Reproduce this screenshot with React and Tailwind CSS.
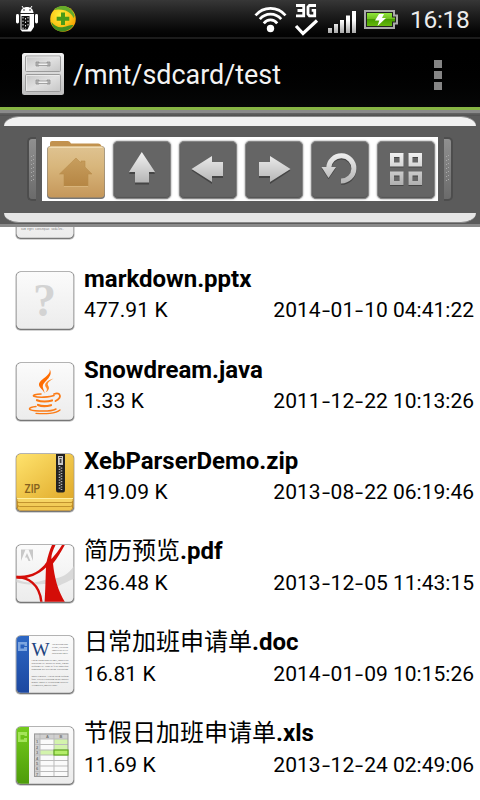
import React from "react";

function StatusBar() {
  return (
    <div className="flex h-[37px] w-full items-start bg-gradient-to-b from-[#373737] to-[#020202]">
      <svg width="80" height="37" viewBox="0 0 80 37">
        <defs>
          <radialGradient id="ball" cx="40%" cy="35%" r="70%">
            <stop offset="0" stopColor="#fff13a" />
            <stop offset=".6" stopColor="#fbc516" />
            <stop offset="1" stopColor="#f39a00" />
          </radialGradient>
        </defs>
        <path d="M22 6l1.600 2.400M32 6l-1.600 2.400" stroke="#fff" strokeWidth="1" />
        <path d="M20.500 13c.3-4 3-6 6.500-6s6.200 2 6.500 6z" fill="#fff" />
        <circle cx="24" cy="10" r=".8" fill="#222" />
        <circle cx="30" cy="10" r=".8" fill="#222" />
        <rect x="16" y="14" width="3" height="9.500" rx="1.400" fill="#fff" />
        <rect x="35" y="14" width="3" height="9.500" rx="1.400" fill="#fff" />
        <path d="M20.500 14H34V27l-3 4.500H22l-1.500-2z" fill="#fff" />
        <path d="M21.500 16h8v9l-2 4.500h-6z" fill="#111" />
        <path d="M23 17v12M25.500 18v11M28 17v9" stroke="#ddd" strokeWidth="1" strokeDasharray="1.500 2" />
        <circle cx="63" cy="19" r="12.800" fill="url(#ball)" />
        <path d="M54 10C58 5 68 4 73 12c2 3 2 4 .5 6-1-3-4-6-8-7.500-4-1-8-1.500-11.500-.5z" fill="#65ab2a" />
        <path d="M73.500 25c-4 7-14 9-19.500 3-1.500-2-2.500-4-2.500-6 3 4 7 6 12 5 4-1 7-2.500 10-2z" fill="#438f20" />
        <path d="M61 12.500h4v4.300h4.300v4h-4.300v4.300h-4v-4.300h-4.300v-4H61z" fill="#4a9a18" />
      </svg>
      <svg className="ml-[170px]" width="150" height="37" viewBox="250 0 150 37">
        <defs>
          <linearGradient id="sig" x1="0" y1="10" x2="0" y2="33" gradientUnits="userSpaceOnUse">
            <stop offset=".45" stopColor="#fff" />
            <stop offset="1" stopColor="#aaa" />
          </linearGradient>
          <linearGradient id="bat" x1="0" y1="0" x2="0" y2="1">
            <stop offset="0" stopColor="#8fe63b" />
            <stop offset=".48" stopColor="#6fbd1d" />
            <stop offset=".5" stopColor="#479e00" />
            <stop offset="1" stopColor="#66b80d" />
          </linearGradient>
        </defs>
        <g fill="none" stroke="#fff">
          <path d="M255.500 15.300C263.500 6 277.500 6 285.500 15.300" strokeWidth="2.600" />
          <path d="M259.800 19.200C265.500 12.500 275.500 12.500 281.200 19.200" strokeWidth="2.700" />
          <path d="M263.800 23.300C267.300 18.800 273.700 18.800 277.200 23.300" strokeWidth="2.700" />
        </g>
        <circle cx="270.500" cy="28.500" r="3.700" fill="#fff" />
        <path d="M296 5.500h7.700v10.300H296M297.500 10.500h6" fill="none" stroke="#fff" strokeWidth="2.800" />
        <path d="M316 5.500h-6.600l-1.400 1.500v7l1.400 1.800h5.300v-5.500h-3" fill="none" stroke="#fff" strokeWidth="2.800" />
        <path d="M296 26l7 7.500 14-13" fill="none" stroke="#fff" strokeWidth="3.200" />
        <path d="M328 28h4v5h-4zM334 24h4v9h-4zM340 20h4v13h-4zM346 15.500h4V33h-4zM352 11h4v22h-4z" fill="url(#sig)" />
        <path d="M364 10h31v4.500h3v10h-3V29h-31z" fill="#aaa" />
        <path d="M366 12h27v4.500h3v6h-3V27h-27z" fill="#222" />
        <path d="M367 13h25v4.500h3v4h-3V26h-25z" fill="url(#bat)" />
        <path d="M379 14h5l-2 4h4l-8.500 8 1.800-5.500H375z" fill="#fff" />
      </svg>
      <div className="ml-[10px] mt-[5px] whitespace-nowrap font-[Roboto,sans-serif] text-[24.500px] leading-[29px] tracking-[-0.3px] text-[#ececec]">
        16:18
      </div>
    </div>
  );
}

function ActionBar() {
  return (
    <div className="flex h-[73px] items-center border-b-[3px] border-t-2 border-b-[#87b544] border-t-[#1c1c1c] bg-gradient-to-b from-black to-[#060707] pl-[21px] pr-[38px]">
      <svg width="44" height="44" viewBox="0 0 44 44" className="mt-px">
        <defs>
          <linearGradient id="cab" x1="0" y1="0" x2="0" y2="1">
            <stop offset="0" stopColor="#f2f2f2" />
            <stop offset="1" stopColor="#bdbdbd" />
          </linearGradient>
          <linearGradient id="drawer" x1="0" y1="0" x2="1" y2="1">
            <stop offset="0" stopColor="#c4c4c4" />
            <stop offset=".5" stopColor="#e0e0e0" />
            <stop offset="1" stopColor="#c6c6c6" />
          </linearGradient>
        </defs>
        <rect x="1" y="1" width="42" height="42" rx="2.500" fill="url(#cab)" />
        <rect x="4.500" y="4" width="35" height="15.500" rx="1" fill="url(#drawer)" stroke="#9b9b9b" />
        <rect x="4.500" y="22.500" width="35" height="17" rx="1" fill="url(#drawer)" stroke="#9b9b9b" />
        <path d="M5.500 18.500V5H38M5.500 38.500V23.500H38" fill="none" stroke="#efefef" strokeWidth=".8" />
        {[10, 28].map((y) => (
          <g key={y}>
            <path d={`M15 ${y}h3v4h-3zM26 ${y}h3v4h-3z`} fill="#bbb" stroke="#888" strokeWidth=".7" />
            <rect x="17" y={y + 1} width="10" height="2.500" fill="#f1f1f1" stroke="#929292" strokeWidth=".8" />
          </g>
        ))}
      </svg>
      <div className="ml-[8px] mt-[3px] flex-1 whitespace-nowrap font-[Roboto,sans-serif] text-[26.900px] leading-8 text-[#f3f3f3]">
        /mnt/sdcard/test
      </div>
      <div className="mt-[3px] flex flex-col gap-[3px]">
        <i className="block size-2 bg-[#858585]" />
        <i className="block size-2 bg-[#858585]" />
        <i className="block size-2 bg-[#858585]" />
      </div>
    </div>
  );
}

function ToolButton({ children }) {
  return (
    <div className="size-[58px] rounded-[5px] border border-[#858585] bg-[#656565] shadow-[0_0_2px_#777,inset_0_-1px_1px_#555]">
      <svg width="56" height="56" viewBox="1 1 56 56">{children}</svg>
    </div>
  );
}

function HomeButton() {
  return (
    <svg width="58" height="60" viewBox="0 0 58 60" className="overflow-visible">
      <defs>
        <linearGradient id="fold" x1="0" y1="0" x2="0" y2="1">
          <stop offset="0" stopColor="#dfc391" />
          <stop offset=".4" stopColor="#d8b67c" />
          <stop offset="1" stopColor="#c5975a" />
        </linearGradient>
        <linearGradient id="house" x1="0" y1="0" x2="0" y2="1">
          <stop offset="0" stopColor="#c79e5e" />
          <stop offset="1" stopColor="#b68644" />
        </linearGradient>
      </defs>
      <rect x="0" y="5" width="58" height="53" rx="4" fill="#777" />
      <path d="M3 7V2q0-2 2-2h16q2 0 3 2.500h27q3 0 4 4z" fill="#c2924e" />
      <rect x=".5" y="5" width="57" height="51.500" rx="4" fill="url(#fold)" />
      <path d="M2.500 6.500h53" stroke="#f1dcb3" />
      <path d="M12.500 33 29 17l5 5v-2h4v6l7 7h-4v12H17V33z" fill="url(#house)" stroke="#b98d4c" strokeWidth=".6" />
      <path d="M17 45.500h24" stroke="#e1bf88" strokeWidth=".7" />
    </svg>
  );
}

function Handle({ right }) {
  return (
    <div
      className={
        right
          ? "flex h-[64px] w-[9px] items-center justify-center rounded-r-[5px] border-y-2 border-r-2 border-[#4d4d4d] bg-gradient-to-b from-[#909090] to-[#6b6b6b]"
          : "flex h-[64px] w-[9px] items-center justify-center rounded-l-[5px] border-y-2 border-l-2 border-[#4d4d4d] bg-gradient-to-b from-[#909090] to-[#6b6b6b]"
      }
    >
      <svg width="5" height="29" viewBox="0 0 5 29">
        <path d="M1.500 1v28M3.500 0v28" stroke="#a9a9a9" strokeWidth="1" strokeDasharray="1 3" />
      </svg>
    </div>
  );
}

function Toolbar() {
  return (
    <div className="h-[117px] border-y-[3px] border-[#8a8a8a] bg-[#5b5b5b]">
      <div className="h-[3px] bg-gradient-to-b from-[#666] to-[#505050]" />
      <div className="mx-[4px] h-[10px] rounded-t-[15px_10px] border-t border-[#888] bg-[#f1f1f1]" />
      <div className="flex h-[87px] items-start pt-[11px]">
        <div className="ml-[27px]"><Handle /></div>
        <div className="ml-[6px] flex h-16 w-[396px] items-start gap-2 bg-white pl-[5px] pt-[4px]">
          <HomeButton />
          <ToolButton>
            <path d="M28.800 13 16 33h6v10.500h14V33h6z" fill="#454545" />
            <path d="M28.800 11 16 31h6v10.500h14V31h6z" fill="url(#arrow)" />
          </ToolButton>
          <ToolButton>
            <path d="M12.500 29.500 33 17v6h11v14H33v6z" fill="#454545" />
            <path d="M12.500 28 33 15v6h11v14H33v6z" fill="url(#arrow)" />
          </ToolButton>
          <ToolButton>
            <path d="M45.500 29.500 25 17v6H14v14h11v6z" fill="#454545" />
            <path d="M45.500 28 25 15v6H14v14h11v6z" fill="url(#arrow)" />
          </ToolButton>
          <ToolButton>
            <g transform="translate(0 1.300)" stroke="#454545" fill="none">
              <path d="M17.700 27A12.600 12.600 0 1 1 30 40" strokeWidth="5" />
              <path d="M10.500 26h14.500l-7.500 11z" fill="#454545" stroke="none" />
            </g>
            <path d="M17.700 27A12.600 12.600 0 1 1 30 40" fill="none" stroke="url(#arrow)" strokeWidth="5" />
            <path d="M10.500 26h14.500l-7.500 11z" fill="url(#arrow)" />
          </ToolButton>
          <ToolButton>
            {[[13, 12], [31.5, 12], [13, 30.5], [31.5, 30.5]].map(([x, y]) => (
              <g key={x + "-" + y} fill="none" strokeWidth="4">
                <rect x={x + 2} y={y + 3} width="9.500" height="9.500" stroke="#454545" />
                <rect x={x + 2} y={y + 2} width="9.500" height="9.500" stroke="url(#arrow)" />
              </g>
            ))}
          </ToolButton>
        </div>
        <div className="ml-[6px]"><Handle right /></div>
      </div>
      <div className="mx-[4px] h-[10px] rounded-b-[15px_10px] border-b border-[#888] bg-[#e6e6e6]" />
    </div>
  );
}

function Tile({ children, print }) {
  return (
    <svg width="62" height="62" viewBox="-2 -2 62 62" className="shrink-0">
      <rect x="-.7" y="-.2" width="59.400" height="59" rx="5" fill="#c4c4c4" />
      <rect x="0" y="-.4" width="58" height="58.300" rx="4.500" fill="#777" />
      <rect x=".5" y="0" width="57" height="56.700" rx="4.500" fill="url(#paper)" />
      <g clipPath="url(#tileclip)">{children}</g>
      {print}
    </svg>
  );
}

function UnknownIcon() {
  return (
    <Tile
      print={
        <text x="28.500" y="43.500" textAnchor="middle" className="font-['Liberation_Serif',serif] text-[46px] font-bold" fill="#d3d3d3">?</text>
      }
    />
  );
}

function TextIcon() {
  return (
    <Tile
      print={
        <text x="5" y="49" textLength="43" lengthAdjust="spacingAndGlyphs" className="font-['Liberation_Mono',monospace] text-[3.400px]" fill="#777">sum eget consequat sodales.</text>
      }
    />
  );
}

function JavaIcon() {
  return (
    <Tile>
      <g fill="none" stroke="#fb7b16" strokeLinecap="round">
        <path d="M25 31c-5 .2-9 1.300-7 2.300 4 1.500 16 1 20-.7" strokeWidth="1.600" />
        <path d="M38 31c6-2 9 3 1.500 7" strokeWidth="1.800" />
        <path d="M21 37.200c4 1.800 11 1.500 15 .3M22 42c4 1.600 9 1.200 13 .2" strokeWidth="2.200" />
        <path d="M20 43.500c-8 1-9 3.500-1 4.200 9 .8 17 .3 21-1.700" strokeWidth="1.500" />
        <path d="M20 50.300c9 1 20 .2 24-3.300" strokeWidth="1.300" />
      </g>
      <path d="M33.500 6c2.500 7-11 10-10.500 16 .3 3 4.500 5 5.500 8.500 0-3.500-2.500-5.500-1.500-8.500C28.500 18 38 13 33.500 6z" fill="#ff6c00" />
      <path d="M37.500 15.500c-8 2.500-10 6-7 9.500 1 1.500 0 3.500-1 4.500 5-3 3.500-5.500 2.300-7.500-.5-2.500 2.500-4.500 5.700-6.500z" fill="#ff8a26" />
    </Tile>
  );
}

function ZipIcon() {
  return (
    <Tile
      print={
        <text x="8.500" y="38.500" textLength="15.500" lengthAdjust="spacingAndGlyphs" className="font-[Roboto,sans-serif] text-[13px] font-medium" fill="#84601d">ZIP</text>
      }
    >
      <defs>
        <linearGradient id="zip" x1="0" y1="0" x2="1" y2="1">
          <stop offset="0" stopColor="#ffe36d" />
          <stop offset="1" stopColor="#e0aa2a" />
        </linearGradient>
      </defs>
      <rect width="58" height="58" fill="#c08a20" />
      <rect x="2" y="51" width="54" height="5" rx="2" fill="#f0c650" />
      <rect x="1.500" y="47.500" width="55" height="5" rx="2" fill="#f2cb58" stroke="#b58423" strokeWidth=".8" />
      <rect x="1" y="43.500" width="56" height="5" rx="2" fill="#f6d464" stroke="#b58423" strokeWidth=".8" />
      <rect width="58" height="44.500" rx="3" fill="url(#zip)" />
      <path d="M1 44.500h56" stroke="#fff0a0" />
      <path d="M40 0h9v36q0 2.500-2 2.500h-5q-2 0-2-2.500z" fill="#222" />
      <path d="M43.500 12v24M45.500 13.500V36" stroke="#b6b6b6" strokeWidth="1.600" strokeDasharray="1.200 1.500" />
      <path d="M42 2h5v9h-5z" fill="#c9c9c9" />
      <path d="M43.700 5h1.700v4h-1.700zM43 3h3v1h-3z" fill="#444" />
    </Tile>
  );
}

function PdfIcon() {
  return (
    <Tile>
      <path d="M58 21C52 30 46 32 37 34L32 34C22 37 12 40 0 34v3c12 4 21 2 32 2l6 3c9-2 13-6 20-8z" fill="#d9d9d9" />
      <path d="M5 4.500h12v11.500H5z" fill="#c8c8c8" />
      <path d="M5 16 9.500 4.500h3L17 16h-2.500l-3.500-8-2 4.500h2l1.500 3.500z" fill="#f8f8f8" />
      <path d="M36 0 39.500 0C36.500 6 35 11 35.500 14 39 10 43 5 46 0h2.800C45 7 41.500 13 37 18.500 38.500 33 42 46 49.500 58H28.500C29.500 45 29.500 32 30 22.500 21 31 10 34.500 0 33.500V30.500C13 32 24 27 30.500 17 32 11 33.500 5 36 0z" fill="#d40d08" />
      <path d="M0 32.300c11-.5 24 6 25.500 26" fill="none" stroke="#d40d08" strokeWidth="2.400" />
    </Tile>
  );
}

const docHead = ["Lorem ipsum dolor", "sit amet, vestibulum", "consectetur ut elit", "adipiscing ligula."];
const docBody = [
  [25, "Lorem ipsum dolor sit amet, consectetur"],
  [28, "adipiscing elit. Mauris ac tortor, tempor"],
  [31, "aliquam elit. Nunc ut felis consequat"],
  [34, "dignissim nec sed lorem vestibulum."],
  [41, "Morbi a mauris. Aenean lorem aliquam"],
  [44, "fusce viverra vestibulum integer sodales"],
  [47, "ornare ligula et vestibulum ultrices."],
  [50, "Vivamus sed, molestie nunc."],
];

function DocIcon() {
  return (
    <Tile
      print={
        <>
          <text x="15.500" y="19.500" textLength="18" lengthAdjust="spacingAndGlyphs" className="font-['Liberation_Serif',serif] text-[19px]" fill="#1d4480">W</text>
          <g className="font-['Liberation_Serif',serif] text-[2.700px]" fill="#555">
            {docHead.map((t, i) => (
              <text key={t} x="36" y={9 + i * 3} textLength="16" lengthAdjust="spacingAndGlyphs">{t}</text>
            ))}
            {docBody.map(([y, t]) => (
              <text key={y} x="15.500" y={y} textLength={y === 50 ? "26" : "37"} lengthAdjust="spacingAndGlyphs">{t}</text>
            ))}
          </g>
        </>
      }
    >
      <rect width="13" height="58" fill="url(#blue)" />
      <path d="M2 6h9v4h-2.500V8.500h-4v4H8V11h3v4H2z" fill="#7da5df" />
    </Tile>
  );
}

function XlsIcon() {
  return (
    <Tile
      print={
        <g className="font-['Liberation_Sans',sans-serif] text-[4px] font-bold" fill="#777">
          <text x="30" y="11">A</text>
          <text x="43.500" y="11">B</text>
          {[1, 2, 3, 4, 5, 6, 7].map((n) => (
            <text key={n} x="20" y={11 + n * 5.4}>{n}</text>
          ))}
        </g>
      }
    >
      <rect width="13" height="58" fill="url(#green)" />
      <path d="M2 5h9v4h-2.500V8h-4v4.500H8V11h3v4H2z" fill="#a4e45a" />
      <rect x="18" y="6.500" width="34" height="43" fill="#fafafa" />
      <path d="M18 6.500h34V12H18zM18 6.500h6v43h-6z" fill="#d0d0d0" />
      <path d="M38 12h14v11H38zM24 23h14v5H24z" fill="#d3f3ac" />
      <path d="M18 12h34M18 17.500h34M18 23h34M18 28h34M18 33.500h34M18 39h34M18 44.500h34M24 6.500v43M38 6.500v43" stroke="#bbb" strokeWidth="1" />
      <rect x="18.500" y="7" width="33.500" height="42.500" fill="none" stroke="#999" />
      <rect x="38" y="23" width="14" height="5" fill="#b4ed69" stroke="#61ab1f" strokeWidth="1.200" />
    </Tile>
  );
}

const files = [
  { Icon: TextIcon, name: "", ext: "", size: "", date: "" },
  { Icon: UnknownIcon, name: "", ext: "markdown.pptx", size: "477.91 K", date: "2014-01-10 04:41:22" },
  { Icon: JavaIcon, name: "", ext: "Snowdream.java", size: "1.33 K", date: "2011-12-22 10:13:26" },
  { Icon: ZipIcon, name: "", ext: "XebParserDemo.zip", size: "419.09 K", date: "2013-08-22 06:19:46" },
  { Icon: PdfIcon, name: "简历预览", ext: ".pdf", size: "236.48 K", date: "2013-12-05 11:43:15" },
  { Icon: DocIcon, name: "日常加班申请单", ext: ".doc", size: "16.81 K", date: "2014-01-09 10:15:26" },
  { Icon: XlsIcon, name: "节假日加班申请单", ext: ".xls", size: "11.69 K", date: "2013-12-24 02:49:06" },
];

function DateText({ value }) {
  return (
    <span>
      {value.split("-").map((part, i) => (
        <React.Fragment key={i}>
          {i > 0 && <span className="inline-block w-[10px] scale-x-140 text-center">-</span>}
          {part}
        </React.Fragment>
      ))}
    </span>
  );
}

function FileRow({ Icon, name, ext, size, date }) {
  return (
    <div className="flex h-[91px] shrink-0 items-start pl-[14px] pr-[6px] pt-[10px]">
      <div className="flex pt-[6px]"><Icon /></div>
      <div className="ml-2 flex-1 whitespace-nowrap font-[Roboto,'Noto_Sans_CJK_SC',sans-serif] text-black">
        <div className="flex h-[31px] items-start text-2xl leading-[30px]">
          {name && <span className="leading-[28px]">{name}</span>}
          <span className={name ? "font-bold leading-[28px]" : "font-bold"}>{ext}</span>
        </div>
        <div className="flex h-[31px] items-center justify-between text-[21px] leading-[31px]">
          <span className="tracking-[0.1px]">{size}</span>
          <DateText value={date} />
        </div>
      </div>
    </div>
  );
}

export default function App() {
  return (
    <div className="flex h-[800px] w-[480px] flex-col overflow-hidden bg-white">
      <svg className="size-0 shrink-0">
        <defs>
          <clipPath id="tileclip"><rect x=".5" y="0" width="57" height="56.700" rx="4.500" /></clipPath>
          <linearGradient id="arrow" x1="0" y1="12" x2="0" y2="46" gradientUnits="userSpaceOnUse">
            <stop offset="0" stopColor="#f0f0f0" />
            <stop offset="1" stopColor="#acacac" />
          </linearGradient>
          <linearGradient id="paper" x1="0" y1="0" x2="0" y2="1">
            <stop offset="0" stopColor="#fbfbfb" />
            <stop offset="1" stopColor="#ececec" />
          </linearGradient>
          <linearGradient id="blue" x1="0" y1="0" x2="0" y2="1">
            <stop offset="0" stopColor="#2d67c4" />
            <stop offset="1" stopColor="#1c479f" />
          </linearGradient>
          <linearGradient id="green" x1="0" y1="0" x2="0" y2="1">
            <stop offset="0" stopColor="#74cb1d" />
            <stop offset="1" stopColor="#4d9b0a" />
          </linearGradient>
        </defs>
      </svg>
      <StatusBar />
      <ActionBar />
      <Toolbar />
      <div className="flex h-[573px] flex-col justify-end overflow-hidden">
        {files.map((f) => (
          <FileRow key={f.ext} {...f} />
        ))}
      </div>
    </div>
  );
}
